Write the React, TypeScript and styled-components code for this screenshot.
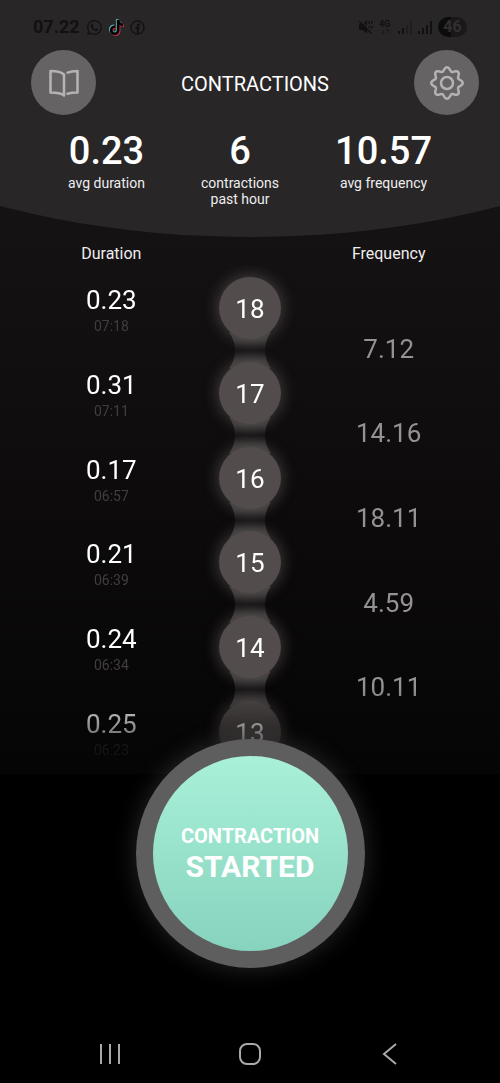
import React from "react";
import styled, { createGlobalStyle } from "styled-components";
import { FaWhatsapp, FaTiktok } from "react-icons/fa";

const GlobalStyle = createGlobalStyle`
  *, *::before, *::after { box-sizing: border-box; }
  body {
    margin: 0;
    background: #000;
    color: #fff;
    font-family: Roboto, "Liberation Sans", sans-serif;
  }
`;

const Screen = styled.div`
  display: flex;
  flex-direction: column;
  min-height: 100vh;
  background: #000;
`;

const Upper = styled.div`
  background: linear-gradient(#181415 0%, #151213 30%, #0e0c0d 60%, #060505 100%);
`;

const Header = styled.header`
  padding-bottom: 30px;
  background: #282627;
  clip-path: ellipse(101% 100% at 50% 0);
`;

const StatusBar = styled.div`
  display: flex;
  align-items: center;
  justify-content: space-between;
  height: 50px;
  padding: 4px 33px 0;
  color: #121011;
`;

const StatusGroup = styled.div`
  display: flex;
  align-items: center;
  gap: 6px;
`;

const Clock = styled.time`
  font-size: 18px;
  font-weight: 700;
  line-height: 20px;
`;

const TikTok = styled(FaTiktok)`
  color: #000;
  filter: drop-shadow(-1px -1px 0 #4fa7a4) drop-shadow(1px 1px 0 #b5324a);
`;

const Battery = styled.span`
  width: 29px;
  border-radius: 10px;
  background: linear-gradient(90deg, #0d0c0c 46%, #1a1819 46%);
  color: #323031;
  font-size: 16px;
  font-weight: 700;
  line-height: 20px;
  text-align: center;
`;

const TopBar = styled.div`
  display: flex;
  align-items: center;
  justify-content: space-between;
  padding: 0 21px 0 31px;
`;

const Title = styled.h1`
  margin: 0;
  padding-top: 2px;
  font-size: 20px;
  font-weight: 400;
  line-height: 24px;
`;

const RoundButton = styled.button`
  display: grid;
  place-items: center;
  width: 65px;
  height: 65px;
  padding: 0;
  border: 0;
  border-radius: 50%;
  background: #656364;
  color: #b4b2b3;
`;

const Stats = styled.dl`
  display: flex;
  justify-content: space-between;
  margin: 14px 0 0;
  padding: 0 68px;
`;

const Stat = styled.div`
  display: flex;
  flex-direction: column-reverse;
  justify-content: flex-end;
  text-align: center;
`;

const StatLabel = styled.dt`
  margin-top: 2px;
  color: #eeedee;
  font-size: 14px;
  line-height: 16px;
  white-space: pre-line;
`;

const StatValue = styled.dd`
  margin: 0;
  font-size: 38px;
  font-weight: 500;
  line-height: 44px;
`;

const Log = styled.table`
  display: block;
  padding: 0 42px;
`;

const LogHead = styled.thead`
  display: block;
`;

const LogHeadRow = styled.tr`
  display: grid;
  grid-template-columns: repeat(3, 1fr);
`;

const Heading = styled.th`
  padding: 6px 0 1px;
  color: #eeedee;
  font-size: 16px;
  font-weight: 400;
  line-height: 22px;
`;

const LogBody = styled.tbody`
  display: grid;
  grid-template-columns: repeat(3, 1fr);
  grid-template-rows: repeat(12, 1fr);
  height: 508px;
  mask-image: linear-gradient(#000 83%, transparent 100%);
`;

const LogRow = styled.tr`
  display: contents;
`;

/* Every entry takes two half rows; a frequency starts one half row lower. */
const Cell = styled.td<{ $col: number; $row: number }>`
  grid-column: ${({ $col }) => $col};
  grid-row: ${({ $row }) => $row} / span 2;
  display: flex;
  flex-direction: column;
  align-items: center;
  justify-content: center;
  padding: 0;
`;

const DurationCell = styled(Cell)`
  padding-top: 6px;
  font-size: 26px;
  line-height: 30px;
`;

const StartTime = styled.time`
  color: #403e3f;
  font-size: 14px;
  line-height: 22px;
`;

const FrequencyCell = styled(Cell)`
  padding-bottom: 4px;
  color: #949293;
  font-size: 26px;
  line-height: 30px;
`;

const NumberCell = styled(Cell)`
  position: relative;
`;

const Bead = styled.span`
  position: relative;
  width: 62px;
  height: 62px;
  padding-top: 1px;
  border-radius: 50%;
  background: #524c4c;
  box-shadow: 0 0 14px 3px rgba(120, 112, 112, 0.4);
  font-size: 26px;
  line-height: 62px;
  text-align: center;
`;

const Link = styled.svg`
  position: absolute;
  top: 50%;
  left: 50%;
  width: 62px;
  height: 100%;
  transform: translateX(-50%);
`;

const Action = styled.main`
  display: flex;
  flex: 1;
  justify-content: center;
  align-items: flex-start;
  margin-top: -35px;
`;

const StartButton = styled.button`
  position: relative;
  display: flex;
  flex-direction: column;
  align-items: center;
  justify-content: center;
  width: 229px;
  height: 229px;
  padding: 0;
  border: 17px solid transparent;
  border-radius: 50%;
  background:
    linear-gradient(#a9f0d8, #87d3be) padding-box,
    linear-gradient(#5e5e5e, #5e5e5e) border-box;
  box-shadow: 0 0 22px 2px rgba(110, 110, 110, 0.3);
  color: #fff;
  font-family: inherit;
  font-weight: 700;
`;

const SmallLine = styled.span`
  font-size: 20px;
  line-height: 26px;
`;

const LargeLine = styled.span`
  font-size: 30px;
  line-height: 36px;
`;

const NavBar = styled.nav`
  display: flex;
  justify-content: space-around;
  padding: 0 40px 17px;
`;

const NavButton = styled.button`
  display: block;
  height: 24px;
  padding: 0;
  border: 0;
  background: none;
  color: #a9a9a9;
`;

const stats = [
  { value: "0.23", label: "avg duration" },
  { value: "6", label: "contractions\npast hour" },
  { value: "10.57", label: "avg frequency" },
];

const entries = [
  { n: 18, duration: "0.23", time: "07:18", frequency: "7.12" },
  { n: 17, duration: "0.31", time: "07:11", frequency: "14.16" },
  { n: 16, duration: "0.17", time: "06:57", frequency: "18.11" },
  { n: 15, duration: "0.21", time: "06:39", frequency: "4.59" },
  { n: 14, duration: "0.24", time: "06:34", frequency: "10.11" },
  { n: 13, duration: "0.25", time: "06:23" },
];

const FacebookIcon = () => (
  <svg width="15" height="15" viewBox="0 0 16 16" fill="none" stroke="currentColor" strokeWidth="1.4">
    <circle cx="8" cy="8" r="7" />
    <path d="M8.2 15V6.6q0-2 2.4-1.8M5.800 8.600h4.600" strokeWidth="1.9" />
  </svg>
);

const MuteIcon = () => (
  <svg width="14" height="14" viewBox="0 0 14 14" fill="currentColor">
    <path d="M0 4h3.500L8 0v13.500L3.500 10H0z" />
    <path d="M10.200 1v3M13 1v3M10.200 6v2.500M13 6v2.500M11.500 11v2.500" fill="none" stroke="currentColor" strokeWidth="1.400" />
    <path d="M1.300 .3l12 12" stroke="#282627" strokeWidth="1.400" />
    <path d="M.3 1.300l12 12" stroke="currentColor" strokeWidth="1.500" />
  </svg>
);

const NetworkIcon = () => (
  <svg width="13" height="16" viewBox="0 0 13 16">
    <text x="0" y="8" fontSize="9" fontWeight="700" fill="currentColor">4G</text>
    <path d="M4 10v5M2.200 13l1.800 2 1.800-2M9 15v-5M7.200 12L9 10l1.800 2" fill="none" stroke="#1c1a1b" />
  </svg>
);

const SignalIcon = ({ level }: { level: number }) => (
  <svg width="14" height="14" viewBox="0 0 14 14">
    {[3, 6, 9, 13].map((h, i) => (
      <rect key={h} x={i * 4} y={14 - h} width="2" height={h} fill={i < level ? "#121011" : "#1f1d1e"} />
    ))}
  </svg>
);

const BookIcon = () => (
  <svg width="30" height="28" viewBox="0 0 30 28" fill="none" stroke="currentColor" strokeWidth="2.600" strokeLinecap="round" strokeLinejoin="round">
    <path d="M15 5.500Q11.500 2 1.500 2v21.500q10 0 13.500 3z" />
    <path d="M18.500 3.600Q22.500 2 28.500 2v21.500q-6 0-10 1.200" />
  </svg>
);

const gearPath = (() => {
  const points: string[] = [];
  for (let i = 0; i <= 160; i++) {
    const a = (i / 160) * Math.PI * 2;
    const r = 13.9 + 1.8 * Math.cos(a * 8);
    points.push(`${(18 + r * Math.sin(a)).toFixed(2)} ${(18 - r * Math.cos(a)).toFixed(2)}`);
  }
  return `M${points.join("L")}Z`;
})();

const GearIcon = () => (
  <svg width="36" height="36" viewBox="0 0 36 36" fill="none" stroke="currentColor" strokeWidth="2.500" strokeLinejoin="round">
    <path d={gearPath} />
    <circle cx="18" cy="18" r="6" />
  </svg>
);

const BeadLink = ({ id }: { id: string }) => (
  <Link viewBox="0 0 62 84" preserveAspectRatio="none" aria-hidden="true">
    <defs>
      <linearGradient id={id} x1="0" y1="0" x2="0" y2="1">
        <stop offset="0.200" stopColor="#3a3737" />
        <stop offset="0.500" stopColor="#161415" />
        <stop offset="0.800" stopColor="#3a3737" />
      </linearGradient>
    </defs>
    <path d="M10 24Q16 32 16 42Q16 52 10 60H52Q46 52 46 42Q46 32 52 24Z" fill={`url(#${id})`} />
  </Link>
);

export default function App() {
  return (
    <Screen>
      <GlobalStyle />
      <Upper>
        <Header>
          <StatusBar>
            <StatusGroup>
              <Clock>07.22</Clock>
              <FaWhatsapp size={17} />
              <TikTok size={15} />
              <FacebookIcon />
            </StatusGroup>
            <StatusGroup>
              <MuteIcon />
              <NetworkIcon />
              <SignalIcon level={2} />
              <SignalIcon level={4} />
              <Battery>46</Battery>
            </StatusGroup>
          </StatusBar>
          <TopBar>
            <RoundButton aria-label="Guide"><BookIcon /></RoundButton>
            <Title>CONTRACTIONS</Title>
            <RoundButton aria-label="Settings"><GearIcon /></RoundButton>
          </TopBar>
          <Stats>
            {stats.map((s) => (
              <Stat key={s.value}>
                <StatLabel>{s.label}</StatLabel>
                <StatValue>{s.value}</StatValue>
              </Stat>
            ))}
          </Stats>
        </Header>
        <Log>
          <LogHead>
            <LogHeadRow>
              <Heading scope="col">Duration</Heading>
              <Heading scope="col" aria-label="Number" />
              <Heading scope="col">Frequency</Heading>
            </LogHeadRow>
          </LogHead>
          <LogBody>
            {entries.map((e, i) => (
              <LogRow key={e.n}>
                <DurationCell $col={1} $row={i * 2 + 1}>
                  {e.duration}
                  <StartTime>{e.time}</StartTime>
                </DurationCell>
                <NumberCell $col={2} $row={i * 2 + 1}>
                  {i < entries.length - 1 && <BeadLink id={`link-${e.n}`} />}
                  <Bead>{e.n}</Bead>
                </NumberCell>
                {e.frequency && (
                  <FrequencyCell $col={3} $row={i * 2 + 2}>{e.frequency}</FrequencyCell>
                )}
              </LogRow>
            ))}
          </LogBody>
        </Log>
      </Upper>
      <Action>
        <StartButton>
          <SmallLine>CONTRACTION</SmallLine>
          <LargeLine>STARTED</LargeLine>
        </StartButton>
      </Action>
      <NavBar aria-label="System">
        <NavButton aria-label="Recent apps">
          <svg width="24" height="24" viewBox="0 0 24 24" stroke="currentColor" strokeWidth="2">
            <path d="M3 2v20M12 2v20M21 2v20" />
          </svg>
        </NavButton>
        <NavButton aria-label="Home">
          <svg width="24" height="24" viewBox="0 0 24 24" fill="none" stroke="currentColor" strokeWidth="2">
            <rect x="2" y="2" width="20" height="20" rx="7" />
          </svg>
        </NavButton>
        <NavButton aria-label="Back">
          <svg width="24" height="24" viewBox="0 0 24 24" fill="none" stroke="currentColor" strokeWidth="2">
            <path d="M18 2L6 12l12 10" />
          </svg>
        </NavButton>
      </NavBar>
    </Screen>
  );
}
